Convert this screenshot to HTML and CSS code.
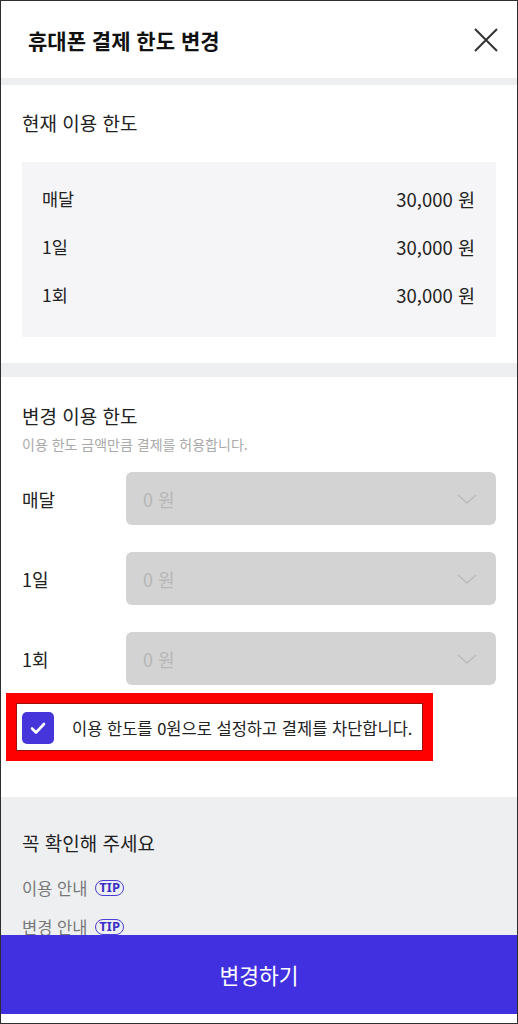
FILE: index.html
```html
<!DOCTYPE html>
<html lang="ko">
<head>
    <meta charset="utf-8">
    <title>휴대폰 결제 한도 변경</title>
    <link rel="stylesheet" href="styles.css">
</head>
<body>
<div class="phone">
    <header class="top">
        <h1>휴대폰 결제 한도 변경</h1>
        <button class="close" aria-label="닫기">
            <svg width="24" height="24" viewBox="0 0 24 24"><path d="M1 1L23 23M23 1L1 23" stroke="#333" stroke-width="2" fill="none"/></svg>
        </button>
    </header>

    <div class="scroll">
        <section class="sec current">
            <h2>현재 이용 한도</h2>
            <div class="limits">
                <div class="limit"><span>매달</span><span class="won">30,000 원</span></div>
                <div class="limit"><span>1일</span><span class="won">30,000 원</span></div>
                <div class="limit"><span>1회</span><span class="won">30,000 원</span></div>
            </div>
        </section>

        <section class="sec change">
            <h2>변경 이용 한도</h2>
            <p class="hint">이용 한도 금액만큼 결제를 허용합니다.</p>
            <div class="fields">
                <div class="field">
                    <span class="label">매달</span>
                    <div class="select"><span>0 원</span>
                        <svg width="20" height="10" viewBox="0 0 20 10"><path d="M1 1L10 9L19 1" stroke="#bcbcbc" stroke-width="1.5" fill="none"/></svg>
                    </div>
                </div>
                <div class="field">
                    <span class="label">1일</span>
                    <div class="select"><span>0 원</span>
                        <svg width="20" height="10" viewBox="0 0 20 10"><path d="M1 1L10 9L19 1" stroke="#bcbcbc" stroke-width="1.5" fill="none"/></svg>
                    </div>
                </div>
                <div class="field">
                    <span class="label">1회</span>
                    <div class="select"><span>0 원</span>
                        <svg width="20" height="10" viewBox="0 0 20 10"><path d="M1 1L10 9L19 1" stroke="#bcbcbc" stroke-width="1.5" fill="none"/></svg>
                    </div>
                </div>
            </div>
            <label class="check-row">
                <span class="box">
                    <svg width="32" height="32" viewBox="0 0 32 32"><path d="M10 16.5L14 20.5L22 12" stroke="#fff" stroke-width="2.6" fill="none" stroke-linecap="round" stroke-linejoin="round"/></svg>
                </span>
                <span>이용 한도를 0원으로 설정하고 결제를 차단합니다.</span>
            </label>
        </section>

        <section class="sec notice">
            <h2>꼭 확인해 주세요</h2>
            <ul class="tips">
                <li>이용 안내 <span class="tip">TIP</span></li>
                <li>변경 안내 <span class="tip">TIP</span></li>
            </ul>
        </section>
    </div>

    <button class="submit">변경하기</button>
    <div class="foot"></div>
</div>
</body>
</html>
```

FILE: styles.css
```css
* {
    box-sizing: border-box;
}

body {
    margin: 0;
    font-family: "Noto Sans CJK KR", "Noto Sans", sans-serif;
    color: #222;
}

.phone {
    height: 1024px;
    border: 1px solid #2e2e2e;
    display: flex;
    flex-direction: column;
    background: #fff;
}

.top {
    height: 77px;
    flex: none;
    display: flex;
    align-items: center;
    justify-content: space-between;
    padding: 0 19px 0 27px;
}

.top h1 {
    margin: 0;
    font-size: 21px;
    font-weight: 700;
    color: #111;
}

.close {
    border: 0;
    background: none;
    padding: 0;
    display: flex;
}

.scroll {
    flex: 1;
    overflow: hidden;
    background: #eeeff1;
}

.sec {
    padding: 0 21px;
}

.sec h2 {
    margin: 0;
    font-size: 19px;
    font-weight: 400;
    line-height: 27px;
    color: #222;
}

.current {
    background: #fff;
    margin-top: 7px;
    padding-top: 24px;
    padding-bottom: 26px;
}

.limits {
    margin-top: 26px;
    background: #f5f5f7;
    padding: 25px 21px 30px 20px;
    display: flex;
    flex-direction: column;
    gap: 24px;
}

.limit {
    display: flex;
    justify-content: space-between;
    font-size: 17.5px;
    line-height: 24px;
    color: #222;
}

.won {
    font-size: 18.5px;
}

.change {
    background: #fff;
    margin-top: 14px;
    padding-top: 25px;
    padding-bottom: 53px;
}

.hint {
    margin: 5px 0 0;
    font-size: 14px;
    line-height: 20px;
    color: #aaa;
}

.fields {
    margin-top: 18px;
    display: flex;
    flex-direction: column;
    gap: 27px;
}

.field {
    display: flex;
    align-items: center;
}

.field .label {
    width: 104px;
    font-size: 18px;
}

.select {
    flex: 1;
    height: 53px;
    border-radius: 6px;
    background: #d3d3d3;
    display: flex;
    align-items: center;
    justify-content: space-between;
    padding: 0 19px 0 17px;
    font-size: 18px;
    color: #b6b6b6;
}

.check-row {
    position: relative;
    margin-top: 27px;
    display: flex;
    align-items: center;
    gap: 18px;
    font-size: 16.5px;
    color: #222;
}

.check-row::after {
    content: "";
    position: absolute;
    left: -16px;
    top: -19px;
    bottom: -17px;
    right: 63px;
    border: 10px solid #f00;
    box-shadow: inset 0 0 0 1px #9a1010;
}

.box {
    width: 32px;
    height: 32px;
    border-radius: 5px;
    background: #4535db;
    display: flex;
}

.notice {
    padding-top: 32px;
}

.tips {
    list-style: none;
    margin: 20px 0 0;
    padding: 0;
    display: flex;
    flex-direction: column;
    gap: 15px;
}

.tips li {
    font-size: 16.5px;
    line-height: 24px;
    color: #777;
    display: flex;
    align-items: center;
    gap: 8px;
}

.tip {
    height: 16px;
    padding: 0 3px;
    border: 1.5px solid #4a3ed6;
    border-radius: 8px;
    font-size: 13px;
    font-weight: 700;
    line-height: 13px;
    color: #3a2fc8;
    font-family: "Noto Sans", sans-serif;
}

.submit {
    flex: none;
    height: 79px;
    border: 0;
    background: #4130df;
    color: #fff;
    font-family: inherit;
    font-size: 21.5px;
}

.foot {
    flex: none;
    height: 9px;
    background: #fff;
}
```
